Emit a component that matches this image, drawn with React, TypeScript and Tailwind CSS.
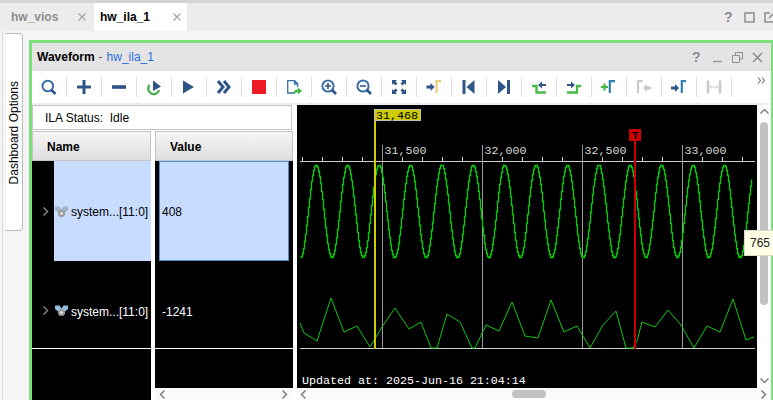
import type { ReactNode } from "react";

const BLUE = "#2f5487";
const LIGHT = "#3b6ea5";
const GREEN = "#46b946";
const GRAY = "#c9c9c9";
const BRACKET = "#2e7fb8";

const arrowRight = (x: number, y: number, fill: string) => (
  <path d={`M${x} ${y - 1.5}h4v-2.5l4 4-4 4v-2.5h-4z`} fill={fill} />
);
const arrowLeft = (x: number, y: number, fill: string) => (
  <path d={`M${x} ${y - 1.5}h-4v-2.5l-4 4 4 4v-2.5h4z`} fill={fill} />
);

const toolbarIcons: ReactNode[] = [
  <>
    <circle cx="8.8" cy="9" r="5.3" fill="none" stroke={LIGHT} strokeWidth="2" />
    <path d="M12.5 13l4 4" stroke={BLUE} strokeWidth="2.6" />
  </>,
  <path d="M3 10h14M10 3v14" stroke={BLUE} strokeWidth="3" />,
  <path d="M3 10h14" stroke={BLUE} strokeWidth="3.6" />,
  <>
    <path d="M5.5 8A5.5 5.5 0 1 0 15 13" fill="none" stroke="#4caf50" strokeWidth="2.4" />
    <path d="M9 3.500l8 6-8 4.500z" fill={BLUE} />
  </>,
  <path d="M4 3.500L15 10 4 16.500z" fill={BLUE} />,
  <path d="M4 4l5 6-5 6M10 4l5 6-5 6" fill="none" stroke={BLUE} strokeWidth="3" />,
  <rect x="3" y="3" width="14" height="14" fill="#ed1c24" />,
  <>
    <path d="M11 16H3.700V3.700h7l3 3V10M10.500 3.700v3.300h3.300" fill="none" stroke={LIGHT} strokeWidth="1.300" />
    <path d="M9 17c.3-3 2-4.500 5-4.500V10.500l4 3.500-4 3.500v-2c-2 0-3.500.5-5 1.500z" fill={GREEN} />
  </>,
  <>
    <circle cx="9" cy="9" r="5.600" fill="none" stroke={LIGHT} strokeWidth="2" />
    <path d="M6 9h6M9 6v6" stroke={BLUE} strokeWidth="1.600" />
    <path d="M13 13l4 4" stroke={BLUE} strokeWidth="2.600" />
  </>,
  <>
    <circle cx="9" cy="9" r="5.600" fill="none" stroke={LIGHT} strokeWidth="2" />
    <path d="M6 9h6" stroke={BLUE} strokeWidth="1.600" />
    <path d="M13 13l4 4" stroke={BLUE} strokeWidth="2.600" />
  </>,
  <path
    d="M3 3h5L6.500 4.500l2 2-2 2-2-2L3 8zM17 3v5l-1.500-1.500-2 2-2-2 2-2L12 3zM3 17v-5l1.500 1.500 2-2 2 2-2 2L8 17zM17 17h-5l1.500-1.500-2-2 2-2 2 2L17 12z"
    fill={BLUE}
  />,
  <>
    {arrowRight(2.500, 10, BLUE)}
    <path d="M12.500 16V4.200H17" fill="none" stroke="#e8d080" strokeWidth="2.400" />
  </>,
  <>
    <rect x="3.500" y="3" width="3" height="14" fill={BLUE} />
    <path d="M15.500 3v14l-8-7z" fill={BLUE} />
  </>,
  <>
    <path d="M4 3v14l8-7z" fill={BLUE} />
    <rect x="13" y="3" width="3" height="14" fill={BLUE} />
  </>,
  <>
    <path d="M3 9h4.500v6.500H17" fill="none" stroke={GREEN} strokeWidth="2.400" />
    <path d="M17 7h-4V4.500L9 8l4 3.500V9h4z" fill={BLUE} />
  </>,
  <>
    <path d="M3 15.500h10V9h4" fill="none" stroke={GREEN} strokeWidth="2.400" />
    <path d="M3 7h4V4.500L11 8l-4 3.500V9H3z" fill={BLUE} />
  </>,
  <>
    <path d="M2 10h7M5.500 6.500v7" stroke={GREEN} strokeWidth="2.200" />
    <path d="M10.800 16V4.200H16" fill="none" stroke={BRACKET} strokeWidth="2.200" />
  </>,
  <>
    <path d="M4 16V4.200H8.500" fill="none" stroke={GRAY} strokeWidth="2.200" />
    {arrowLeft(17, 11, GRAY)}
  </>,
  <>
    {arrowRight(2, 11, BLUE)}
    <path d="M12.800 16V4.200H17" fill="none" stroke={BRACKET} strokeWidth="2.200" />
  </>,
  <>
    <path d="M4 3.500v13M16 3.500v13" stroke={GRAY} strokeWidth="2.600" />
    <path d="M6 10h8M7.500 8.500L6 10l1.500 1.500M12.500 8.500L14 10l-1.500 1.500" fill="none" stroke={GRAY} strokeWidth="1" />
  </>,
];

// sampled trace, drawn as a staircase like the analyzer does
const sinePath = () => {
  const level = (x: number) =>
    Math.round(211 + 46.5 * Math.cos((2 * Math.PI * (x - 299.7)) / 31.4)) + 0.5;
  let d = `M300.500 ${level(300)}`;
  for (let x = 301; x <= 751; x += 1) {
    d += `H${x + 0.5}V${level(x)}`;
  }
  return d;
};

const signalA = [
  [300, 323], [304, 333], [317, 341], [331, 298], [344, 332], [357, 326], [370, 347],
  [382, 327], [395, 308], [409, 329], [421, 322], [431, 348], [437, 348], [447, 314],
  [460, 322], [472, 348], [475, 348], [486, 325], [499, 331], [512, 302], [525, 336],
  [538, 338], [551, 300], [564, 332], [577, 326], [590, 348], [603, 325], [616, 311],
  [626, 348], [633, 348], [637, 341], [642, 322], [655, 327], [668, 310], [681, 325],
  [694, 348], [707, 326], [720, 332], [733, 299], [746, 340], [754, 337],
];

const majorTicks = [
  { x: 382.500, label: "31,500" },
  { x: 482.500, label: "32,000" },
  { x: 582.500, label: "32,500" },
  { x: 682.500, label: "33,000" },
];

const minorTicks = Array.from({ length: 23 }, (_, i) => 302.500 + i * 20);

function Waveform() {
  return (
    <svg viewBox="297 105 460 283" className="block h-[283px] w-[460px] bg-black">
      <g shapeRendering="crispEdges" stroke="#d0d0d0" strokeWidth="1">
        <path d="M300 161.500H755M300 348.500H755" />
        {minorTicks.map((x) => (
          <path key={x} d={`M${x} 157V161`} />
        ))}
      </g>
      {majorTicks.map((t) => (
        <g key={t.label}>
          <path d={`M${t.x} 145V348`} stroke="#9a9a9a" strokeWidth="1" shapeRendering="crispEdges" />
          <text x={t.x + 2} y="154" fill="#d8d8d8" fontSize="11.670" fontFamily="'Liberation Mono', monospace">
            {t.label}
          </text>
        </g>
      ))}
      <path d={sinePath()} fill="none" stroke="#00d000" strokeWidth="1.300" />
      <polyline
        points={signalA.map((p) => p.join(",")).join(" ")}
        fill="none"
        stroke="#0cc80c"
        strokeWidth="1"
      />
      <rect x="374" y="120" width="2" height="229" fill="#cccc00" />
      <rect x="374.500" y="109.500" width="46" height="11" fill="#cccc00" stroke="#c0c0c0" />
      <text x="376" y="119" fill="#000" fontSize="11.670" fontFamily="'Liberation Mono', monospace">
        31,468
      </text>
      <rect x="634" y="140" width="2" height="209" fill="#cc0000" />
      <rect x="629" y="129" width="12" height="12" fill="#cc0000" />
      <text x="632" y="139" fill="#000" fontSize="11" fontWeight="bold" fontFamily="'Liberation Mono', monospace">
        T
      </text>
      <text x="302" y="384" fill="#fff" fontSize="11.670" fontFamily="'Liberation Mono', monospace">
        Updated at: 2025-Jun-16 21:04:14
      </text>
    </svg>
  );
}

function ProbeIcon({ top }: { top: string }) {
  return (
    <svg width="13" height="12" viewBox="0 0 13 12" className="shrink-0">
      <path d="M0 0.500h4.500l2 3 2-3H13v3.500l-3 2.500H3L0 4z" fill={top} />
      <circle cx="6.500" cy="7.500" r="3.600" fill="#9c9c9c" />
      <circle cx="6.500" cy="7.500" r="1.300" fill="#efefef" />
    </svg>
  );
}

function Chevron({ dir, className }: { dir: "left" | "right" | "up" | "down"; className?: string }) {
  const paths = {
    left: "M6.500 1.500L2.500 5.500l4 4",
    right: "M3.500 1.500l4 4-4 4",
    up: "M1.500 6.500L5.500 2.500l4 4",
    down: "M1.500 3.500L5.500 7.500l4-4",
  };
  return (
    <svg width="11" height="11" viewBox="0 0 11 11" className={className}>
      <path d={paths[dir]} fill="none" stroke="#808080" strokeWidth="1.500" />
    </svg>
  );
}

export default function App() {
  return (
    <div className="relative flex h-[400px] w-[773px] flex-col overflow-hidden bg-[#f5f5f5] font-['Liberation_Sans',sans-serif] text-[12px] text-black">
      {/* Tabs */}
      <div className="flex h-[31px] shrink-0 border-t-[3px] border-[#d4d4d4] bg-[#ececec]">
        <div className="flex w-[94px] items-center justify-between pl-[11px] pr-[7px] font-bold text-[#8c8c8c]">
          <span>hw_vios</span>
          <svg width="10" height="10" viewBox="0 0 10 10">
            <path d="M1.500 1.500l7 7M8.500 1.500l-7 7" stroke="#a8a8a8" strokeWidth="1.400" />
          </svg>
        </div>
        <div className="flex w-[93px] items-center justify-between bg-white pl-[6px] pr-[5px] font-bold">
          <span>hw_ila_1</span>
          <svg width="10" height="10" viewBox="0 0 10 10">
            <path d="M1.500 1.500l7 7M8.500 1.500l-7 7" stroke="#a8a8a8" strokeWidth="1.400" />
          </svg>
        </div>
        <div className="ml-auto flex items-center gap-[9px] text-[#8c8c8c]">
          <span className="w-[11px] text-[14px] font-bold leading-none">?</span>
          <svg width="11" height="11" viewBox="0 0 11 11">
            <rect x="1" y="1" width="9" height="9" fill="none" stroke="#8c8c8c" strokeWidth="1.500" />
          </svg>
          <svg width="9" height="11" viewBox="0 0 9 11">
            <path d="M6 1H1v9h8" fill="none" stroke="#8c8c8c" strokeWidth="1.500" />
            <path d="M5 6l4-4" stroke="#8c8c8c" strokeWidth="1.500" />
          </svg>
        </div>
      </div>

      <div className="flex min-h-0 flex-1">
        {/* Dashboard Options side tab */}
        <div className="-mr-[2px] ml-[2px] w-[29px] shrink-0 border-l border-[#dcdcdc] pl-[3px] pt-[2px]">
          <div className="flex h-[198px] w-[17px] items-center justify-center rounded-r-[4px] border border-l-0 border-[#bdbdbd] bg-white pt-[1px]">
            <span className="rotate-180 whitespace-nowrap [writing-mode:vertical-rl]">Dashboard Options</span>
          </div>
        </div>

        {/* Waveform panel */}
        <div className="mt-[9px] flex min-w-0 flex-1 flex-col border-l-[3px] border-r-[2px] border-t-[3px] border-[#7ee07a] bg-white">
          <div className="flex h-[28px] shrink-0 items-center bg-[#e4e4e4] pl-[5px]">
            <span className="font-bold">Waveform</span>
            <span className="ml-[4px] text-[#555]">-</span>
            <span className="ml-[4px] text-[#2a6de0]">hw_ila_1</span>
            <div className="ml-auto flex items-center gap-[9px] pr-[8px]">
              <span className="w-[11px] text-[14px] font-bold leading-none text-[#8c8c8c]">?</span>
              <svg width="11" height="11" viewBox="0 0 11 11">
                <path d="M1 9.500h9" stroke="#a0a0a0" strokeWidth="1.500" />
              </svg>
              <svg width="11" height="11" viewBox="0 0 11 11">
                <path d="M3.500 3V.5h7v6.500H8M.5 3.500h7V10.500h-7z" fill="none" stroke="#8c8c8c" strokeWidth="1" />
              </svg>
              <svg width="11" height="11" viewBox="0 0 11 11">
                <path d="M1 1l9 9M10 1l-9 9" stroke="#8c8c8c" strokeWidth="1.600" />
              </svg>
            </div>
          </div>

          <div className="relative flex h-[32px] shrink-0 items-center bg-white">
            {toolbarIcons.map((icon, i) => (
              <div key={i} className="flex h-[20px] w-[35px] shrink-0 items-center justify-center border-r border-[#dcdcdc]">
                <svg width="20" height="20" viewBox="0 0 20 20">
                  {icon}
                </svg>
              </div>
            ))}
            <svg width="9" height="7" viewBox="0 0 9 7" className="absolute right-[5px] top-[6px]">
              <path d="M1 .5l2.500 3L1 6.500M5 .5l2.500 3L5 6.500" fill="none" stroke="#777" strokeWidth="1.100" />
            </svg>
          </div>

          <div className="flex min-h-0 flex-1 border-t-[2px] border-[#eeeeee]">
            {/* Name / value tables */}
            <div className="flex w-[261px] shrink-0 flex-col">
              <div className="flex h-[25px] w-[260px] shrink-0 items-center border border-[#c4c4c4] bg-white pl-[12px] pt-[1px]">
                ILA Status:&nbsp; Idle
              </div>
              <div className="flex min-h-0 flex-1 gap-[4px] pt-[1px]">
                <div className="flex w-[119px] shrink-0 flex-col bg-black">
                  <div className="flex h-[30px] shrink-0 items-center border border-[#c4c4c4] bg-gradient-to-b from-[#f6f6f6] to-[#dedede] pl-[14px] pt-[1px] font-bold">
                    Name
                  </div>
                  <div className="flex h-[100px] shrink-0 text-black">
                    <div className="flex w-[22px] items-center justify-end pr-[3px] pt-[1px]">
                      <Chevron dir="right" />
                    </div>
                    <div className="flex min-w-0 flex-1 items-center gap-[3px] bg-[#c8dcff] pl-[1px] pt-[1px]">
                      <ProbeIcon top="#9db4c4" />
                      <span className="whitespace-nowrap">system...[11:0]</span>
                    </div>
                  </div>
                  <div className="flex h-[88px] shrink-0 border-b border-white text-white">
                    <div className="flex w-[22px] items-start justify-end pr-[3px] pt-[44px]">
                      <Chevron dir="right" />
                    </div>
                    <div className="flex min-w-0 flex-1 items-start gap-[3px] pl-[1px] pt-[44px]">
                      <ProbeIcon top="#8fc0de" />
                      <span className="-mt-[2px] whitespace-nowrap">system...[11:0]</span>
                    </div>
                  </div>
                </div>
                <div className="flex w-[138px] shrink-0 flex-col">
                  <div className="flex h-[30px] shrink-0 items-center border border-[#c4c4c4] bg-gradient-to-b from-[#f6f6f6] to-[#dedede] pl-[14px] pt-[1px] font-bold">
                    Value
                  </div>
                  <div className="min-h-0 flex-1 bg-black">
                    <div className="h-[100px] px-[4px]">
                      <div className="flex h-full items-center border border-[#4a90c8] bg-[#c8dcff] pl-[2px] pt-[1px]">408</div>
                    </div>
                    <div className="h-[88px] border-b border-white pl-[7px] pt-[42px] text-white">-1241</div>
                  </div>
                  <div className="flex h-[12px] shrink-0 items-center justify-between bg-[#fafafa] px-[3px]">
                    <Chevron dir="left" />
                    <Chevron dir="right" />
                  </div>
                </div>
              </div>
            </div>

            {/* Waveform and scrollbars */}
            <div className="ml-[4px] flex min-w-0 flex-1 flex-col">
              <div className="flex">
                <Waveform />
                <div className="relative flex h-[283px] w-[14px] shrink-0 flex-col items-center bg-white">
                  <Chevron dir="up" className="mt-[2px]" />
                  <div className="mt-[4px] h-[183px] w-[8px] rounded-[4px] bg-[#c2c2c2]" />
                  <Chevron dir="down" className="mb-[2px] mt-auto" />
                </div>
              </div>
              <div className="flex h-[12px] items-center bg-[#fafafa] px-[2px]">
                <Chevron dir="left" />
                <div className="ml-[202px] h-[8px] w-[34px] rounded-[4px] bg-[#c2c2c2]" />
                <Chevron dir="right" className="ml-auto" />
              </div>
            </div>
          </div>
        </div>
      </div>

      {/* Value tooltip */}
      <div className="absolute left-[744px] top-[230px] flex h-[26px] w-[30px] items-center border border-[#d8d8c8] bg-[#ffffe6] pl-[5px] text-[#222]">
        765
      </div>
    </div>
  );
}
